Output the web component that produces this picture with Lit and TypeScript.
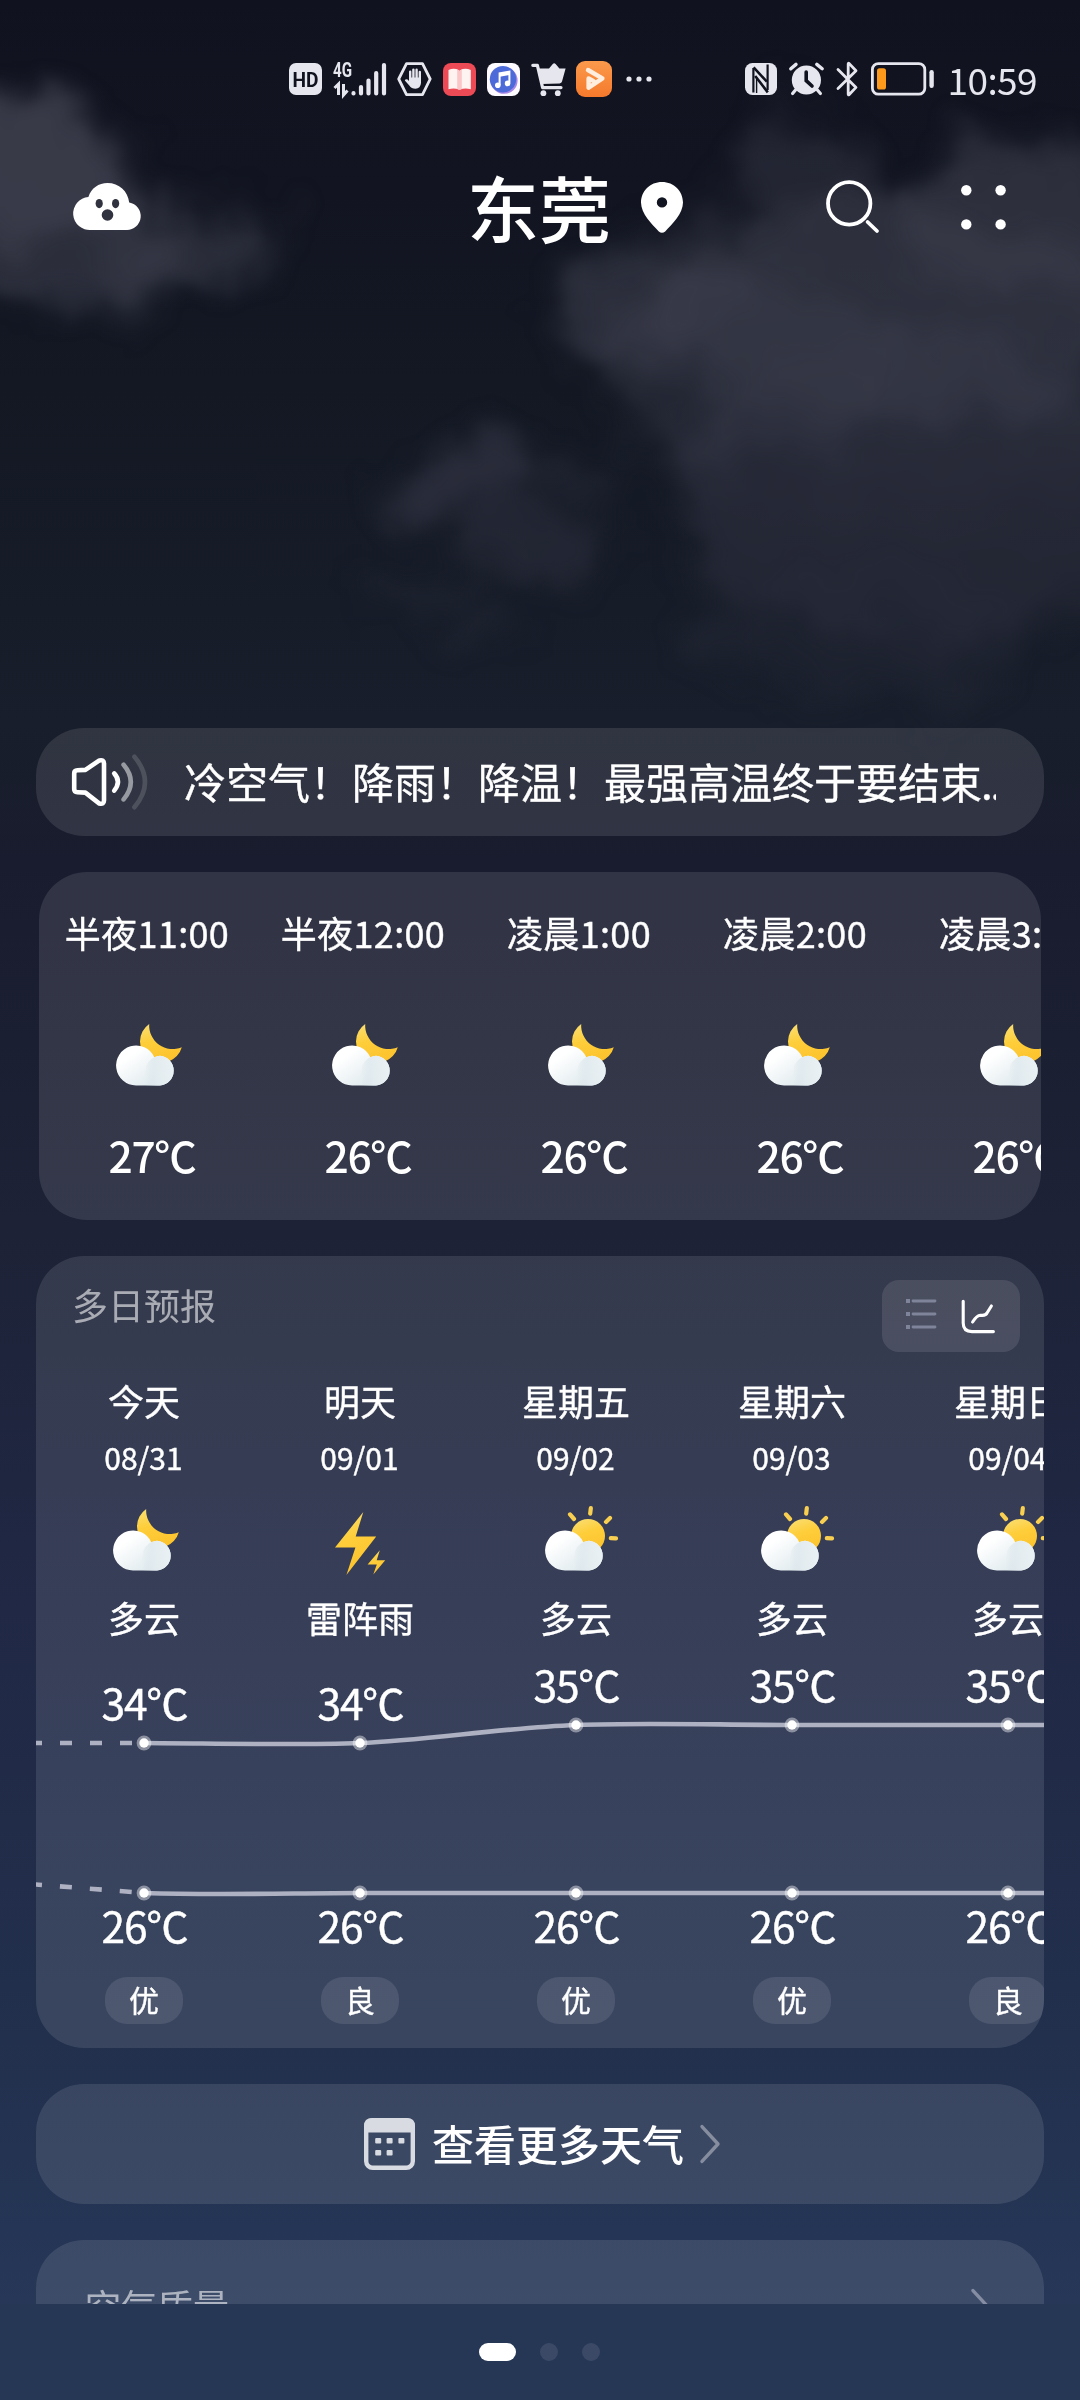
import { LitElement, html, svg, css } from "lit";
import { customElement, property } from "lit/decorators.js";

type Weather = "night" | "thunder" | "sun";

interface Hour {
  time: string;
  temp: number;
}

interface Day {
  name: string;
  date: string;
  icon: Weather;
  text: string;
  high: number;
  low: number;
  air: string;
}

const HOURS: Hour[] = [
  { time: "半夜11:00", temp: 27 },
  { time: "半夜12:00", temp: 26 },
  { time: "凌晨1:00", temp: 26 },
  { time: "凌晨2:00", temp: 26 },
  { time: "凌晨3:00", temp: 26 },
];

const DAYS: Day[] = [
  { name: "今天", date: "08/31", icon: "night", text: "多云", high: 34, low: 26, air: "优" },
  { name: "明天", date: "09/01", icon: "thunder", text: "雷阵雨", high: 34, low: 26, air: "良" },
  { name: "星期五", date: "09/02", icon: "sun", text: "多云", high: 35, low: 26, air: "优" },
  { name: "星期六", date: "09/03", icon: "sun", text: "多云", high: 35, low: 26, air: "优" },
  { name: "星期日", date: "09/04", icon: "sun", text: "多云", high: 35, low: 26, air: "良" },
];

const COLUMN = 216;
const DEGREE_STEP = 18;
const MAX_HIGH = 35;
const highY = (d: Day) => 3 + (MAX_HIGH - d.high) * DEGREE_STEP;
const LOW_Y = 171;

@customElement("weather-icon")
export class WeatherIcon extends LitElement {
  @property() kind: Weather = "night";

  static styles = css`
    :host { display: block; width: 66px; height: 62px; }
    svg { display: block; overflow: visible; }
  `;

  private cloud() {
    return svg`
      <path fill="url(#cloud)" d="M20 61.5 A20 20 0 1 1 38.3 33.2 A15 15 0 0 1 44 31.8 A14.9 14.9 0 0 1 44 61.5 Z"></path>
      <path fill="url(#fold)" d="M38.3 33.2 A15 15 0 0 0 29.5 46 A24 24 0 0 0 29 61.5 H44 A14.9 14.9 0 0 0 44 31.8 A15 15 0 0 0 38.3 33.2 Z"></path>`;
  }

  private body() {
    if (this.kind === "thunder") {
      return svg`
        <path fill="url(#gold)" d="M34.3 3 L26.7 27.5 H47.2 L17.4 66 L26.4 38.6 H6 Z"></path>
        <path fill="url(#gold)" d="M50.8 41.2 L47.7 51.3 H56.2 L44.3 65.4 L47.8 55.6 H38.6 Z"></path>`;
    }
    if (this.kind === "sun") {
      return svg`
        <g stroke="#f9cf52" stroke-width="4.2" stroke-linecap="round">
          <path d="M25 5.4 L29 10 M45.8 -.8 L45.2 4.6 M65 9 L61 12.9 M65.8 29.1 L71 29.4"></path>
        </g>
        <circle cx="43" cy="27" r="17" fill="url(#gold)"></circle>
        ${this.cloud()}`;
    }
    return svg`
      <path fill="url(#gold)" d="M33.2 0 A21.3 21.3 0 1 0 65.8 23.3 A23.6 23.6 0 0 1 33.2 0 Z"></path>
      ${this.cloud()}`;
  }

  render() {
    return html`<svg width="66" height="62" viewBox="0 0 66 62">
      <defs>
        <linearGradient id="cloud" x1="0" y1="0" x2="1" y2="1">
          <stop offset=".25" stop-color="#ffffff"></stop>
          <stop offset="1" stop-color="#d5e3e8"></stop>
        </linearGradient>
        <linearGradient id="fold" x1="0" y1=".6" x2="1" y2=".5">
          <stop offset="0" stop-color="#d8e4ea" stop-opacity="0"></stop>
          <stop offset=".4" stop-color="#e2ebef"></stop>
          <stop offset="1" stop-color="#eaf1f4"></stop>
        </linearGradient>
        <linearGradient id="gold" x1=".3" y1="0" x2=".6" y2="1">
          <stop offset="0" stop-color="#fadc6c"></stop>
          <stop offset=".4" stop-color="#fece3a"></stop>
          <stop offset="1" stop-color="#fcc22c"></stop>
        </linearGradient>
      </defs>
      ${this.body()}
    </svg>`;
  }
}

@customElement("status-bar")
export class StatusBar extends LitElement {
  static styles = css`
    :host { display: flex; flex: none; align-items: center; box-sizing: border-box; height: 158px; padding: 0 43px 0 289px; color: #e6e7ee; }
    svg { display: block; flex: none; overflow: visible; }
    .group { display: flex; align-items: center; }
    .right { margin-left: auto; }
    .signal { margin-left: 11px; }
    .hand { margin-left: 10px; }
    .app { margin-left: 11px; }
    .video { margin-left: 9px; }
    .dots { margin-left: 14px; }
    .alarm { margin-left: 12px; }
    .bt { margin-left: 12px; }
    .battery { margin-left: 13px; }
    .clock { margin-left: 13px; font-size: 37px; line-height: 44px; letter-spacing: -0.6px; }
    .hd { font: 700 20px "Roboto", sans-serif; }
    .net { font: 700 20px "Roboto", sans-serif; }
  `;

  render() {
    return html`
      <div class="group">
        <svg width="33" height="32" viewBox="0 0 33 32">
          <rect width="33" height="32" rx="7" fill="#e6e7ee"></rect>
          <text class="hd" x="16.5" y="24.2" text-anchor="middle" textLength="26" lengthAdjust="spacingAndGlyphs" fill="#10121e">HD</text>
        </svg>
        <svg class="signal" width="54" height="34" viewBox="0 0 54 34">
          <text class="net" x="0" y="15.4" textLength="19" lengthAdjust="spacingAndGlyphs" fill="#e6e7ee">4G</text>
          <path d="M1.5 26 L5.5 22 V33 M10.5 22 V33 L14.5 28.5" stroke="#e6e7ee" stroke-width="3" fill="none"></path>
          <path d="M20.5 31.2 V31.4 M28 25 V31.4 M35.5 18.5 V31.4 M43.2 11 V31.4 M51 3 V31.4" stroke="#e6e7ee" stroke-width="4.2" stroke-linecap="round"></path>
        </svg>
        <svg class="hand" width="35" height="34" viewBox="0 0 35 34">
          <path d="M9.5 1.6 H25.5 L33.2 17 L25.5 32.6 H9.5 L1.7 17 Z" fill="none" stroke="#e6e7ee" stroke-width="2.8" stroke-linejoin="round"></path>
          <path d="M13.2 18 V9.6 M16.4 16 V7.6 M19.6 16 V7.8 M22.8 18 V10" stroke="#e6e7ee" stroke-width="2.4" stroke-linecap="round"></path>
          <path d="M12 15.5 H24 V21 Q23.5 26.5 18.5 26.8 Q14.5 26.8 12.3 23.6 L7.8 18.4 Q8.6 16.4 10.6 17.6 L12 19 Z" fill="#e6e7ee"></path>
        </svg>
        <svg class="app" width="33" height="33" viewBox="0 0 33 33">
          <rect width="33" height="33" rx="8" fill="#ec4a55"></rect>
          <path d="M5.5 7 Q11 4.5 16 7.2 V26.5 Q11 24.5 5.5 26.2 Z M27.8 7 Q22 4.5 17 7.2 V26.5 Q22 24.5 27.8 26.2 Z" fill="#fff3f2"></path>
          <path d="M14.2 6.5 L16.5 7.4 L18.8 6.5 V26 L16.5 27 L14.2 26 Z" fill="#fbc6c8"></path>
        </svg>
        <svg class="app" width="33" height="33" viewBox="0 0 33 33">
          <rect width="33" height="33" rx="8" fill="#fdfbff"></rect>
          <circle cx="17.2" cy="17.4" r="13.4" fill="#a887e6"></circle>
          <circle cx="16" cy="16.2" r="13.2" fill="#4d6bd8"></circle>
          <path d="M12.6 22 V10.4 L22.4 8.6 V19.8" fill="none" stroke="#fff" stroke-width="2"></path>
          <path d="M12.6 10.2 L22.4 8.4 V12 L12.6 13.8 Z" fill="#fff"></path>
          <circle cx="10.8" cy="22.2" r="2.8" fill="#fff"></circle>
          <circle cx="20.6" cy="20.4" r="2.8" fill="#fff"></circle>
        </svg>
        <svg class="app" width="36" height="34" viewBox="0 0 36 34">
          <path d="M1.8 3.3 H6.4 L11.6 25.6 H30" fill="none" stroke="#e6e7ee" stroke-width="3.2" stroke-linecap="round" stroke-linejoin="round"></path>
          <path d="M7 6.6 H18 L21.8 2 Q23.2 .6 24.6 2 L28.4 6.6 H34.6 L31 19.6 Q30.6 21.2 28.6 21.4 L10.4 22 Z" fill="#e6e7ee"></path>
          <circle cx="12.4" cy="31.2" r="2.9" fill="#e6e7ee"></circle>
          <circle cx="26.8" cy="31.2" r="2.9" fill="#e6e7ee"></circle>
        </svg>
        <svg class="video" width="36" height="36" viewBox="0 0 36 36">
          <defs><linearGradient id="v" x1="0" y1="0" x2="0" y2="1"><stop offset="0" stop-color="#fb9a4c"></stop><stop offset="1" stop-color="#f5792c"></stop></linearGradient></defs>
          <rect width="36" height="36" rx="9" fill="url(#v)"></rect>
          <path d="M12 9 L26.4 17.4 L12.6 26.8 V17.4 L17.6 20.2" fill="none" stroke="#ffeede" stroke-width="4.4" stroke-linecap="round" stroke-linejoin="round"></path>
        </svg>
        <svg class="dots" width="26" height="6" viewBox="0 0 26 6">
          <g fill="#e6e7ee"><circle cx="3" cy="3" r="2.6"></circle><circle cx="13" cy="3" r="2.6"></circle><circle cx="23" cy="3" r="2.6"></circle></g>
        </svg>
      </div>
      <div class="group right">
        <svg width="32" height="32" viewBox="0 0 32 32">
          <rect width="32" height="32" rx="7.5" fill="#e6e7ee"></rect>
          <path d="M8.4 29.5 V5 M22.6 1.5 V27" fill="none" stroke="#10121e" stroke-width="2.2"></path>
          <path d="M8.6 4.4 L21.8 18.6 M10.2 13 L22.8 29.4" stroke="#10121e" stroke-width="2.6"></path>
          <path d="M11.6 14 V30" stroke="#10121e" stroke-width="1.4"></path>
        </svg>
        <svg class="alarm" width="35" height="34" viewBox="0 0 35 34">
          <circle cx="17.4" cy="18" r="14.6" fill="#e6e7ee"></circle>
          <path d="M1.8 6.8 L7 2.4 M27.8 2.4 L33.2 6.8" stroke="#e6e7ee" stroke-width="3.4" stroke-linecap="round"></path>
          <path d="M6.5 28 L3.6 31.6 M28.4 28 L31.4 31.6" stroke="#e6e7ee" stroke-width="3.2" stroke-linecap="round"></path>
          <path d="M17.2 10 V18.6 L23 24" fill="none" stroke="#10121e" stroke-width="3.6" stroke-linecap="round"></path>
        </svg>
        <svg class="bt" width="22" height="36" viewBox="0 0 22 36">
          <path d="M2 8.4 L20 26.4 L13 33.8 Q12.2 34.2 12.2 33 V3 Q12.2 1.8 13 2.4 L20 9.8 L2 27.6" fill="none" stroke="#e6e7ee" stroke-width="2.8" stroke-linecap="round" stroke-linejoin="round"></path>
        </svg>
        <svg class="battery" width="64" height="34" viewBox="0 0 64 34">
          <rect x="1.4" y="1.6" width="52.4" height="30.6" rx="6" fill="none" stroke="#e6e7ee" stroke-width="2.8"></rect>
          <rect x="6" y="6.2" width="9" height="21.4" rx="2.6" fill="#fd9a1b"></rect>
          <rect x="58.4" y="8" width="4.4" height="18" rx="2.2" fill="#e6e7ee"></rect>
        </svg>
        <div class="clock">10:59</div>
      </div>
    `;
  }
}

@customElement("night-sky")
export class NightSky extends LitElement {
  static styles = css`
    :host { display: block; }
    svg { display: block; width: 1080px; height: 760px; }
  `;

  render() {
    return html`<svg viewBox="0 0 1080 760">
      <defs>
        <filter id="puff" x="-200" y="0" width="1500" height="800" filterUnits="userSpaceOnUse" color-interpolation-filters="sRGB">
          <feGaussianBlur in="SourceGraphic" stdDeviation="15" result="soft"></feGaussianBlur>
          <feTurbulence type="fractalNoise" baseFrequency="0.011" numOctaves="4" seed="7" result="n"></feTurbulence>
          <feDisplacementMap in="soft" in2="n" scale="90" xChannelSelector="R" yChannelSelector="G" result="d"></feDisplacementMap>
          <feGaussianBlur in="d" stdDeviation="5"></feGaussianBlur>
        </filter>
        <linearGradient id="fade" x1="0" y1="90" x2="0" y2="700" gradientUnits="userSpaceOnUse">
          <stop offset="0" stop-color="#393a48"></stop>
          <stop offset=".4" stop-color="#393b4a"></stop>
          <stop offset=".7" stop-color="#2c2e3d"></stop>
          <stop offset="1" stop-color="#222634"></stop>
        </linearGradient>
      </defs>
      <g filter="url(#puff)" fill="url(#fade)">
        <ellipse cx="15" cy="165" rx="110" ry="75"></ellipse>
        <ellipse cx="50" cy="245" rx="140" ry="68" opacity=".65"></ellipse>
        <ellipse cx="185" cy="245" rx="92" ry="44" opacity=".6"></ellipse>
        <ellipse cx="650" cy="310" rx="95" ry="62" opacity=".65"></ellipse>
        <ellipse cx="740" cy="370" rx="150" ry="95" opacity=".5"></ellipse>
        <ellipse cx="890" cy="315" rx="230" ry="110" opacity=".7"></ellipse>
        <ellipse cx="700" cy="238" rx="60" ry="32" opacity=".4"></ellipse>
        <ellipse cx="800" cy="170" rx="62" ry="58" opacity=".45"></ellipse>
        <ellipse cx="1030" cy="225" rx="130" ry="75" opacity=".7"></ellipse>
        <ellipse cx="920" cy="490" rx="250" ry="150" opacity=".7"></ellipse>
        <ellipse cx="880" cy="635" rx="180" ry="64" opacity=".5"></ellipse>
        <ellipse cx="465" cy="485" rx="70" ry="38" opacity=".8"></ellipse>
        <ellipse cx="535" cy="545" rx="78" ry="30" opacity=".65"></ellipse>
        <ellipse cx="570" cy="480" rx="46" ry="20" opacity=".4"></ellipse>
        <ellipse cx="420" cy="590" rx="60" ry="18" opacity=".4"></ellipse>
        <ellipse cx="480" cy="635" rx="40" ry="18" opacity=".5"></ellipse>
      </g>
    </svg>`;
  }
}

@customElement("app-root")
export class AppRoot extends LitElement {
  static styles = css`
    :host {
      display: block;
      width: 1080px;
      height: 2400px;
      font-family: "Noto Sans CJK SC", sans-serif;
      color: #ffffff;
    }
    * { box-sizing: border-box; }
    svg { display: block; flex: none; overflow: visible; }
    .screen {
      position: relative;
      display: flex;
      flex-direction: column;
      width: 1080px;
      height: 2400px;
      overflow: hidden;
      background: linear-gradient(180deg, #11121f 0%, #121521 8%, #131823 16%, #181e2b 30%, #191c2e 36%, #1d2236 51%, #202845 67%, #22304d 85%, #263758 96%, #263755 100%);
    }
    .sky { position: absolute; inset: 0 0 auto 0; }
    .content { position: relative; display: flex; flex-direction: column; flex: none; height: 2304px; overflow: hidden; }
    .header { display: grid; flex: none; grid-template-columns: 1fr auto 1fr; align-items: center; height: 96px; padding: 0 72px 0 74px; }
    .cloud { margin-top: 1px; }
    .city { font-size: 72px; line-height: 96px; font-weight: 500; margin-left: -4px; }
    .tools { display: flex; align-items: center; }
    .pin { margin-left: 30px; margin-top: 3px; }
    .search { margin-left: 143px; }
    .menu { margin-left: 82px; margin-top: 3px; }
    .stack { display: flex; flex: none; flex-direction: column; gap: 36px; padding: 474px 36px 0; }
    .card { flex: none; background: rgba(255, 255, 255, 0.105); border-radius: 48px; overflow: hidden; }
    .notice { display: flex; align-items: center; height: 108px; padding-left: 36px; }
    .notice-text { margin-left: 36px; width: 812px; overflow: hidden; white-space: nowrap; font-size: 42px; line-height: 62px; padding-bottom: 3px; -webkit-text-stroke: 0.4px #ffffff; }
    .ellipsis { letter-spacing: -2.2px; margin-left: -1px; }
    .hours { display: grid; grid-template-columns: repeat(5, 216px); height: 348px; margin: 0 3px; padding-top: 38px; }
    .col { display: flex; flex-direction: column; align-items: center; white-space: nowrap; -webkit-text-stroke: 0.4px #ffffff; }
    .time { font-size: 36px; line-height: 44px; }
    .hours .time { letter-spacing: 0.35px; }
    .icon { margin-left: 4px; }
    .hours .icon { margin-top: 70px; }
    .temp { font-size: 42.5px; line-height: 42px; letter-spacing: -1.3px; }
    .hours .temp { margin-top: 48px; padding-left: 10px; font-weight: 500; -webkit-text-stroke: 0; }
    .forecast { height: 792px; }
    .head { display: flex; justify-content: space-between; align-items: flex-start; height: 122px; padding: 24px 24px 0 36px; }
    .title { font-size: 36px; line-height: 48px; color: rgba(255, 255, 255, 0.58); }
    .toggle { display: flex; align-items: center; width: 138px; height: 72px; padding: 0 25px 0 24px; justify-content: space-between; background: rgba(255, 255, 255, 0.1); border-radius: 17px; }
    .days, .lows { display: grid; grid-template-columns: repeat(5, 216px); }
    .days { height: 344px; }
    .date { margin-top: 15px; font-size: 30px; line-height: 40px; padding-right: 1px; }
    .days .icon { margin-top: 32px; }
    .cond { margin-top: 24px; font-size: 36px; line-height: 44px; }
    .high { margin-top: 6px; }
    .days .temp, .lows .temp { padding-left: 1px; }
    .lows { padding-top: 2px; }
    .air { display: flex; align-items: center; justify-content: center; width: 78px; height: 47px; margin-top: 31px; padding-bottom: 3px; border-radius: 22px; background: rgba(255, 255, 255, 0.1); font-size: 30px; line-height: 40px; }
    .more { display: flex; align-items: center; height: 120px; padding-left: 328px; }
    .more-text { margin-left: 17px; margin-right: 16px; font-size: 42px; line-height: 60px; font-weight: 500; padding-bottom: 3px; }
    .quality { display: flex; justify-content: space-between; height: 300px; padding: 37px 53px 0 49px; font-size: 36px; line-height: 56px; color: rgba(255, 255, 255, 0.58); }
    .quality-arrow { margin-top: 12px; }
    .pager { display: flex; flex: none; align-items: center; justify-content: center; gap: 24px; height: 96px; padding-right: 1px; background: #263755; position: relative; }
    .dot { width: 18px; height: 18px; border-radius: 9px; background: #3b4967; }
    .dot.on { width: 37px; background: #ffffff; }
  `;

  private hour(h: Hour) {
    return html`<div class="col">
      <div class="time">${h.time}</div>
      <weather-icon class="icon" kind="night"></weather-icon>
      <div class="temp">${h.temp}℃</div>
    </div>`;
  }

  private day(d: Day) {
    return html`<div class="col">
      <div class="time">${d.name}</div>
      <div class="date">${d.date}</div>
      <weather-icon class="icon" kind=${d.icon}></weather-icon>
      <div class="cond">${d.text}</div>
      <div class="high" style="padding-top:${highY(d) + 15}px"><div class="temp">${d.high}℃</div></div>
    </div>`;
  }

  private low(d: Day) {
    return html`<div class="col">
      <div class="temp">${d.low}℃</div>
      <div class="air">${d.air}</div>
    </div>`;
  }

  private point(x: number, y: number) {
    return svg`
      <circle cx=${x} cy=${y} r="7.4" fill="#ffffff" opacity=".42"></circle>
      <circle cx=${x} cy=${y} r="4.7" fill="#ffffff"></circle>`;
  }

  private chart() {
    return html`<svg width="1008" height="180" viewBox="0 0 1008 180">
      <g fill="none" stroke="#adb1c2" stroke-width="4.6">
        <path d="M-6 21 H104" stroke-dasharray="12 18"></path>
        <path d="M-6 162 L104 170.6" stroke-dasharray="12 18"></path>
        <path d="M108 21 C180 21.4 260 23.4 324 21 S468 5.6 540 3 S684 3 756 3 H1080"></path>
        <path d="M108 171 C180 173.4 252 171.2 324 171 H1080"></path>
      </g>
      ${DAYS.map((d, i) => {
        const x = COLUMN * (i + 0.5);
        return svg`${this.point(x, highY(d))}${this.point(x, LOW_Y)}`;
      })}
    </svg>`;
  }

  render() {
    return html`<div class="screen">
      <night-sky class="sky"></night-sky>
      <div class="content">
        <status-bar></status-bar>
        <div class="header">
          <svg class="cloud" width="67" height="47" viewBox="0 0 67 47">
            <path fill="#fff" d="M17 47 A16.5 16.5 0 0 1 14.4 14 C17.4 5 24.6 0 33.5 0 C45 0 54 8 55.2 19.6 A13.8 13.8 0 0 1 52.4 47 Z"></path>
            <ellipse cx="25.2" cy="20.6" rx="3.6" ry="4.6" fill="#30323f"></ellipse>
            <ellipse cx="41.6" cy="20.6" rx="3.6" ry="4.6" fill="#30323f"></ellipse>
            <circle cx="33.5" cy="32" r="5.8" fill="#30323f"></circle>
          </svg>
          <div class="city">东莞</div>
          <div class="tools">
            <svg class="pin" width="42" height="51" viewBox="0 0 42 51">
              <path fill="#fff" fill-rule="evenodd" d="M21 0 C33 0 42 9 42 20.6 C42 31.6 31 42.5 24.2 49.5 Q21 52 17.8 49.5 C11 42.5 0 31.6 0 20.6 C0 9 9 0 21 0 Z M21 15.2 A5.2 5.2 0 1 0 21 25.6 A5.2 5.2 0 1 0 21 15.2 Z"></path>
            </svg>
            <svg class="search" width="53" height="53" viewBox="0 0 53 53">
              <circle cx="23.2" cy="23.4" r="21.2" fill="none" stroke="#fff" stroke-width="3.8"></circle>
              <path d="M41.6 42 L51 51" stroke="#fff" stroke-width="3.8" stroke-linecap="round"></path>
            </svg>
            <svg class="menu" width="45" height="45" viewBox="0 0 45 45">
              <g fill="#fff">
                <circle cx="5.3" cy="5.3" r="5.2"></circle><circle cx="39.6" cy="5.3" r="5.2"></circle>
                <circle cx="5.3" cy="39.4" r="5.2"></circle><circle cx="39.6" cy="39.4" r="5.2"></circle>
              </g>
            </svg>
          </div>
        </div>
        <div class="stack">
          <div class="card notice">
            <svg width="76" height="56" viewBox="0 0 76 56">
              <path d="M2.2 19.4 Q2.2 16.4 5.4 16.3 L13.4 15.9 L27.4 6.4 Q32 5.4 32 9.4 V46.6 Q32 50.6 27.4 49.6 L13.4 38.6 L5.4 38.2 Q2.2 38 2.2 35.2 Z" fill="none" stroke="#fff" stroke-width="4.6" stroke-linejoin="round"></path>
              <g fill="none" stroke="#fff" stroke-width="4.6" stroke-linecap="round">
                <path d="M42.2 19.4 Q49.6 27.6 42.2 36.6"></path>
                <path d="M51.6 10.8 Q66 27.8 51.6 45.4" opacity=".5"></path>
                <path d="M62.4 2.8 Q83.6 27.8 62.4 53.2" opacity=".14"></path>
              </g>
            </svg>
            <div class="notice-text">冷空气！降雨！降温！最强高温终于要结束<span class="ellipsis">...</span></div>
          </div>
          <div class="card hours">${HOURS.map((h) => this.hour(h))}</div>
          <div class="card forecast">
            <div class="head">
              <div class="title">多日预报</div>
              <div class="toggle">
                <svg width="30" height="30" viewBox="0 0 30 30">
                  <path d="M7 0 H29 M7 13 H29 M7 26 H29" stroke="#80849a" stroke-width="2.8" stroke-linecap="round"></path>
                  <path d="M0 0 H4 M0 13 H4 M0 26 H4" stroke="#80849a" stroke-width="4.2"></path>
                </svg>
                <svg width="35" height="35" viewBox="0 0 35 35">
                  <path d="M3.2 2.2 V24 Q3.2 32.6 12 32.6 H33.4" fill="none" stroke="#fff" stroke-width="3.1" stroke-linecap="round"></path>
                  <path d="M12.6 23 Q17 16 20.4 16.2 Q25.8 17 27.2 13.6 L31.4 7" fill="none" stroke="#fff" stroke-width="3.1" stroke-linecap="round"></path>
                </svg>
              </div>
            </div>
            <div class="days">${DAYS.map((d) => this.day(d))}</div>
            ${this.chart()}
            <div class="lows">${DAYS.map((d) => this.low(d))}</div>
          </div>
          <div class="card more">
            <svg width="51" height="52" viewBox="0 0 51 52">
              <rect x="2.2" y="2.2" width="46.6" height="47.6" rx="6.5" fill="none" stroke="#d9dbe2" stroke-width="4.4"></rect>
              <path d="M0 14.6 V8 Q0 0 8 0 H43 Q51 0 51 8 V14.6 Z" fill="#d9dbe2"></path>
              <g fill="#d9dbe2">
                <rect x="11.2" y="20" width="6" height="5.6" rx="1"></rect><rect x="22.6" y="20" width="6" height="5.6" rx="1"></rect><rect x="34.4" y="20" width="6" height="5.6" rx="1"></rect>
                <rect x="11.2" y="32" width="6" height="5.6" rx="1"></rect><rect x="22.6" y="32" width="6" height="5.6" rx="1"></rect>
              </g>
            </svg>
            <div class="more-text">查看更多天气</div>
            <svg width="20" height="38" viewBox="0 0 20 38">
              <path d="M2 1.6 L18 19 L2 36.4" fill="none" stroke="#858d9f" stroke-width="3.4" stroke-linecap="round" stroke-linejoin="round"></path>
            </svg>
          </div>
          <div class="card quality">
            <div>空气质量</div>
            <svg class="quality-arrow" width="20" height="38" viewBox="0 0 20 38">
              <path d="M2 1.6 L18 19 L2 36.4" fill="none" stroke="#858da3" stroke-width="3.4" stroke-linecap="round" stroke-linejoin="round"></path>
            </svg>
          </div>
        </div>
      </div>
      <div class="pager"><div class="dot on"></div><div class="dot"></div><div class="dot"></div></div>
    </div>`;
  }
}
